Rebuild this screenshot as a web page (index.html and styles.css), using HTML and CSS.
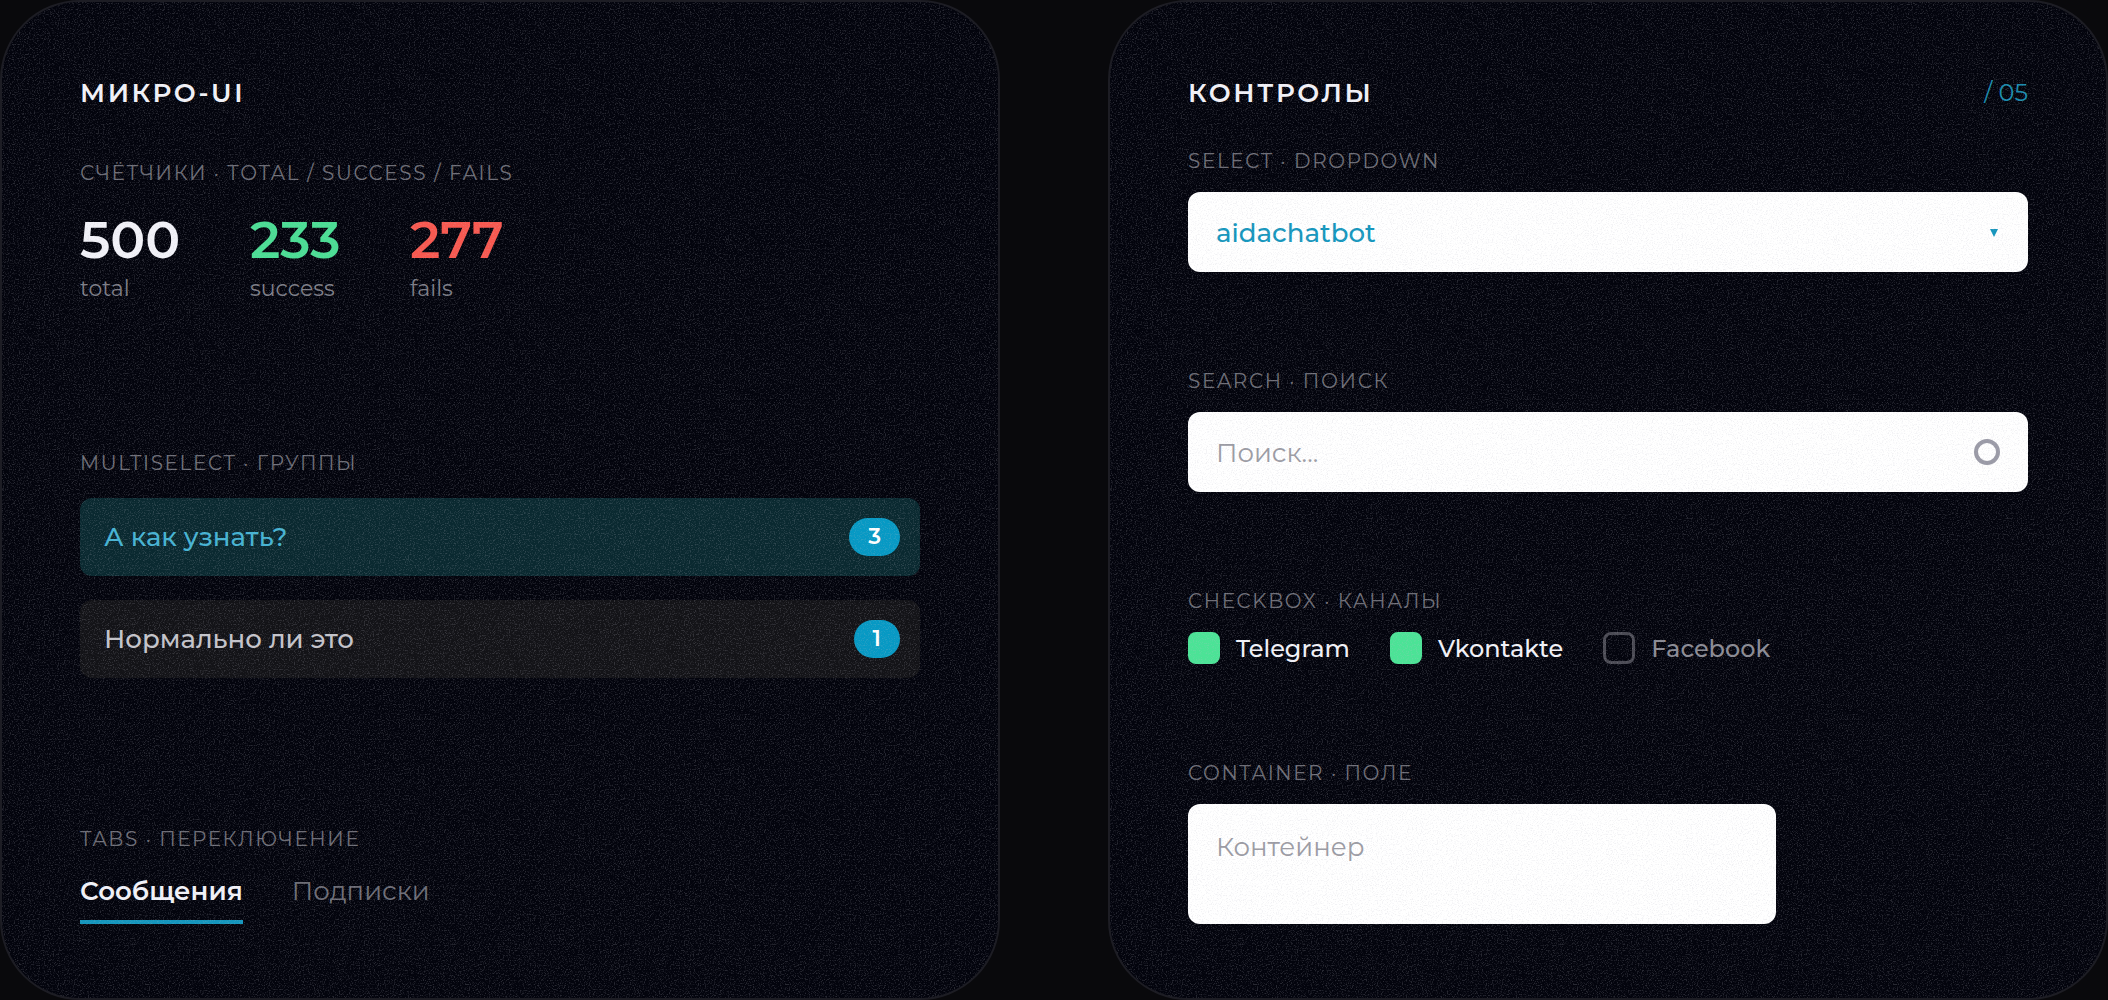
FILE: index.html
```html
<!DOCTYPE html>
<html lang="ru">
<head>
<meta charset="utf-8">
<meta name="viewport" content="width=device-width, initial-scale=1">
<title>Микро-UI</title>
<link rel="stylesheet" href="styles.css">
</head>
<body>
<main class="board">
  <section class="card card-micro">
    <header class="card-head"><h2 class="title">МИКРО-UI</h2></header>
    <div class="card-body">
      <div class="group">
        <h3 class="label">СЧЁТЧИКИ · TOTAL / SUCCESS / FAILS</h3>
        <dl class="counters">
          <div class="counter"><dt>total</dt><dd>500</dd></div>
          <div class="counter counter-success"><dt>success</dt><dd>233</dd></div>
          <div class="counter counter-fails"><dt>fails</dt><dd>277</dd></div>
        </dl>
      </div>
      <div class="group">
        <h3 class="label">MULTISELECT · ГРУППЫ</h3>
        <div class="options">
          <button class="option option-active" type="button" aria-pressed="true"><span>А как узнать?</span><span class="badge">3</span></button>
          <button class="option" type="button" aria-pressed="false"><span>Нормально ли это</span><span class="badge">1</span></button>
        </div>
      </div>
      <div class="group">
        <h3 class="label">TABS · ПЕРЕКЛЮЧЕНИЕ</h3>
        <div class="tabs" role="tablist">
          <button class="tab tab-active" type="button" role="tab" aria-selected="true">Сообщения</button>
          <button class="tab" type="button" role="tab" aria-selected="false">Подписки</button>
        </div>
      </div>
    </div>
    <svg class="grain" aria-hidden="true">
      <filter id="grain" x="0" y="0" width="100%" height="100%">
        <feTurbulence type="fractalNoise" baseFrequency="0.8" numOctaves="3" stitchTiles="stitch"/>
        <feColorMatrix values="0 0 0 0 0.5  0 0 0 0 0.5  0 0 0 0 0.58  4 0 0 0 -2"/>
      </filter>
      <rect width="100%" height="100%" filter="url(#grain)"/>
    </svg>
  </section>

  <section class="card card-controls">
    <header class="card-head"><h2 class="title">КОНТРОЛЫ</h2><span class="index">/ 05</span></header>
    <div class="card-body">
      <div class="group">
        <label class="label" for="bot">SELECT · DROPDOWN</label>
        <div class="field">
          <select class="control select" id="bot"><option>aidachatbot</option></select>
          <svg class="arrow" viewBox="0 0 8 8" aria-hidden="true"><path d="M0 0h8L4 8z"/></svg>
        </div>
      </div>
      <div class="group">
        <label class="label" for="search">SEARCH · ПОИСК</label>
        <div class="field">
          <input class="control" id="search" type="text" placeholder="Поиск...">
          <span class="ring"></span>
        </div>
      </div>
      <div class="group" role="group" aria-labelledby="channels">
        <h3 class="label" id="channels">CHECKBOX · КАНАЛЫ</h3>
        <div class="checks">
          <label class="check"><input type="checkbox" checked><span>Telegram</span></label>
          <label class="check"><input type="checkbox" checked><span>Vkontakte</span></label>
          <label class="check"><input type="checkbox"><span>Facebook</span></label>
        </div>
      </div>
      <div class="group">
        <label class="label" for="container">CONTAINER · ПОЛЕ</label>
        <textarea class="control area" id="container" placeholder="Контейнер"></textarea>
      </div>
    </div>
    <svg class="grain" aria-hidden="true"><rect width="100%" height="100%" filter="url(#grain)"/></svg>
  </section>
</main>
</body>
</html>
```
FILE: styles.css
```css
* { box-sizing: border-box; }

body, h2, h3, dl, dd { margin: 0; }

body {
  background: #09090c;
  color: #f2f2f8;
  font-family: Montserrat, Inter, sans-serif;
  font-size: 26px;
  line-height: 32px;
}

button, input, select, textarea {
  margin: 0;
  border: 0;
  font: inherit;
  color: inherit;
}

.board {
  display: grid;
  grid-template-columns: 1fr 1fr;
  gap: 108px;
  min-height: 100vh;
}

.card {
  position: relative;
  display: flex;
  flex-direction: column;
  padding: 74px 78px;
  border: 2px solid #1d1d24;
  border-radius: 80px;
  background: #03040d;
  overflow: hidden;
}

/* Film grain laid over the whole card */
.grain {
  position: absolute;
  inset: 0;
  width: 100%;
  height: 100%;
  pointer-events: none;
  opacity: 0.2;
}

.card-head {
  display: flex;
  justify-content: space-between;
  margin-bottom: 38px;
  line-height: 34px;
}

.card-micro .card-head { margin-bottom: 50px; }

.title {
  font-size: 26px;
  font-weight: 600;
  letter-spacing: 0.1em;
}

.index {
  color: #1a8caf;
  font-size: 24px;
}

.card-body {
  flex: 1;
  display: flex;
  flex-direction: column;
  justify-content: space-between;
}

.group {
  display: flex;
  flex-direction: column;
  gap: 18px;
}

.card-micro .group { gap: 22px; }

.label {
  color: #6c6c75;
  font-size: 20px;
  font-weight: 400;
  line-height: 26px;
  letter-spacing: 0.08em;
}

.counters {
  display: grid;
  grid-template-columns: 170px 160px auto;
}

.counter {
  display: flex;
  flex-direction: column-reverse;
  gap: 4px;
}

.counter dt {
  color: #7c7c85;
  font-size: 22px;
  line-height: 26px;
}

.counter dd {
  font-size: 52px;
  font-weight: 600;
  line-height: 64px;
}

.counter-success dd { color: #4ade94; }
.counter-fails dd { color: #f8584f; }

.options {
  display: flex;
  flex-direction: column;
  gap: 24px;
}

.option {
  display: flex;
  align-items: center;
  justify-content: space-between;
  padding: 20px 20px 20px 24px;
  border-radius: 12px;
  background: #131317;
  color: #c4c4ca;
  font-weight: 500;
}

.option-active {
  background: #0a2930;
  color: #45b3d3;
}

.badge {
  padding: 0 19px;
  border-radius: 20px;
  background: #0699c4;
  color: #fff;
  font-size: 22px;
  font-weight: 600;
  line-height: 38px;
}

.tabs {
  display: flex;
  gap: 49px;
}

.tab {
  padding: 0 0 12px;
  border-bottom: 4px solid transparent;
  background: none;
  color: #6c6c75;
  line-height: 34px;
}

.tab-active {
  border-color: #1496bd;
  color: #f2f2f8;
  font-weight: 600;
}

.field {
  position: relative;
  display: flex;
}

.control {
  width: 100%;
  padding: 25px 28px 23px;
  border-radius: 12px;
  background: #fff;
}

.control::placeholder {
  color: #9b9ba3;
  opacity: 1;
}

.select {
  appearance: none;
  color: #1496bd;
  font-weight: 500;
}

.arrow {
  position: absolute;
  top: 37px;
  right: 30px;
  width: 8px;
  height: 8px;
  fill: #1496bd;
}

.ring {
  position: absolute;
  top: 27px;
  right: 28px;
  width: 26px;
  height: 26px;
  border: 4px solid #9a9aa6;
  border-radius: 50%;
}

.checks {
  display: flex;
  flex-wrap: wrap;
  gap: 40px;
}

.check {
  display: flex;
  gap: 16px;
  color: #8a8a93;
  font-size: 24px;
  font-weight: 500;
  line-height: 34px;
  height: 32px;
}

.check:has(input:checked) { color: #f2f2f8; }

.check input {
  appearance: none;
  width: 32px;
  height: 32px;
  border: 3px solid #4a4a53;
  border-radius: 8px;
}

.check input:checked {
  border-color: #4be396;
  background: #4be396;
}

.area {
  display: block;
  width: 70%;
  height: 120px;
  padding: 27px 28px;
  resize: none;
}
```
